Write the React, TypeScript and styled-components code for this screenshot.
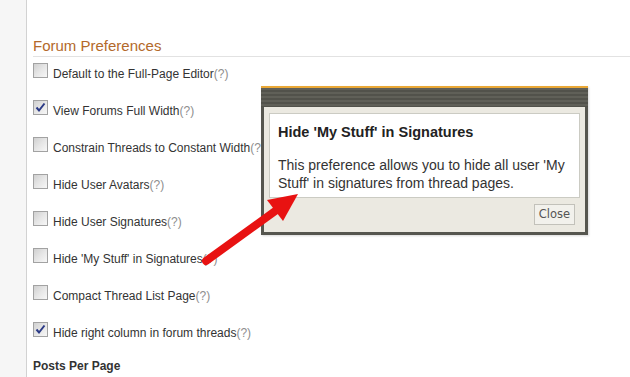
import React from "react";
import styled, { createGlobalStyle } from "styled-components";

const Global = createGlobalStyle`
  html, body {
    margin: 0;
    padding: 0;
    background: #fff;
    font-family: "Liberation Sans", Arial, sans-serif;
  }
`;

const Page = styled.div`
  position: relative;
  display: flex;
  width: 630px;
  height: 377px;
  overflow: hidden;
`;

const Rail = styled.div`
  width: 26px;
  flex: none;
  background: #f6f6f6;
  border-right: 1px solid #d2d2d2;
`;

const Main = styled.div`
  flex: 1;
  padding: 37px 0 0 6px;
`;

const Heading = styled.h2`
  margin: 0 0 6px;
  padding-bottom: 1px;
  font-size: 15px;
  line-height: 18px;
  font-weight: normal;
  color: #b3692b;
  border-bottom: 1px solid #e2e2e2;
`;

const Row = styled.label`
  display: flex;
  align-items: flex-start;
  gap: 5px;
  margin-bottom: 19px;
`;

const Box = styled.span`
  width: 13px;
  height: 13px;
  flex: none;
  border: 1px solid #a2a2a2;
  background: linear-gradient(135deg, #d0d0d0 0%, #e6e6e6 50%, #f7f7f7 100%);
  display: flex;
  align-items: center;
  justify-content: center;
`;

const Label = styled.span`
  margin-top: 4px;
  font-size: 12px;
  line-height: 14px;
  color: #333;
`;

const Help = styled.span`
  color: #8e8e8e;
`;

const SubHead = styled.div`
  margin-top: 4px;
  font-size: 12px;
  line-height: 14px;
  font-weight: bold;
  color: #333;
`;

const Popup = styled.div`
  position: absolute;
  left: 261px;
  top: 86px;
  width: 327px;
  box-shadow: 1px 1px 2px rgba(0, 0, 0, 0.15);
`;

const PopupHeader = styled.div`
  height: 19px;
  border-top: 2px solid #eaa836;
  background: repeating-linear-gradient(
    180deg,
    #606058 0px,
    #606058 2px,
    #52524b 2px,
    #52524b 4px
  );
`;

const PopupBody = styled.div`
  background: #ebe9e1;
  border: 3px solid #56564f;
  border-top: none;
  padding: 6px 5px 7px;
  display: flex;
  flex-direction: column;
  align-items: flex-end;
`;

const Inner = styled.div`
  align-self: stretch;
  background: #fff;
  border: 1px solid #cbcbc3;
  padding: 10px 8px 5px;
`;

const Title = styled.div`
  font-size: 14.5px;
  line-height: 16px;
  font-weight: bold;
  color: #222;
  margin-bottom: 16px;
`;

const Desc = styled.div`
  font-size: 14px;
  line-height: 18px;
  color: #333;
`;

const CloseButton = styled.button`
  margin: 6px 5px 0 0;
  height: 21px;
  padding: 0 4px;
  border: 1px solid #c2c1ba;
  background: #f2f1ec;
  color: #555;
  font-family: "DejaVu Sans", Verdana, sans-serif;
  font-size: 11.5px;
  line-height: 19px;
`;

const Arrow = styled.svg`
  position: absolute;
  left: 0;
  top: 0;
  pointer-events: none;
`;

type Pref = { text: string; checked?: boolean };

const prefs: Pref[] = [
  { text: "Default to the Full-Page Editor" },
  { text: "View Forums Full Width", checked: true },
  { text: "Constrain Threads to Constant Width" },
  { text: "Hide User Avatars" },
  { text: "Hide User Signatures" },
  { text: "Hide 'My Stuff' in Signatures" },
  { text: "Compact Thread List Page" },
  { text: "Hide right column in forum threads", checked: true },
];

function Checkbox({ checked }: { checked?: boolean }) {
  return (
    <Box>
      {checked && (
        <svg width="11" height="11" viewBox="0 0 11 11">
          <path d="M1.5 5.5 L4 8.5 L9.5 1.5" fill="none" stroke="#2b3a86" strokeWidth="2" />
        </svg>
      )}
    </Box>
  );
}

export default function App() {
  return (
    <>
      <Global />
      <Page>
        <Rail />
        <Main>
          <Heading>Forum Preferences</Heading>
          {prefs.map((p) => (
            <Row key={p.text}>
              <Checkbox checked={p.checked} />
              <Label>
                {p.text}
                <Help>(?)</Help>
              </Label>
            </Row>
          ))}
          <SubHead>Posts Per Page</SubHead>
        </Main>

        <Popup>
          <PopupHeader />
          <PopupBody>
            <Inner>
              <Title>Hide 'My Stuff' in Signatures</Title>
              <Desc>
                This preference allows you to hide all user 'My Stuff' in signatures from thread pages.
              </Desc>
            </Inner>
            <CloseButton>Close</CloseButton>
          </PopupBody>
        </Popup>

        <Arrow width="630" height="377" viewBox="0 0 630 377">
          <line x1="206" y1="261" x2="278" y2="209" stroke="#e81212" strokeWidth="8" strokeLinecap="round" />
          <polygon points="298,194 267,200 283,221" fill="#e81212" />
        </Arrow>
      </Page>
    </>
  );
}
